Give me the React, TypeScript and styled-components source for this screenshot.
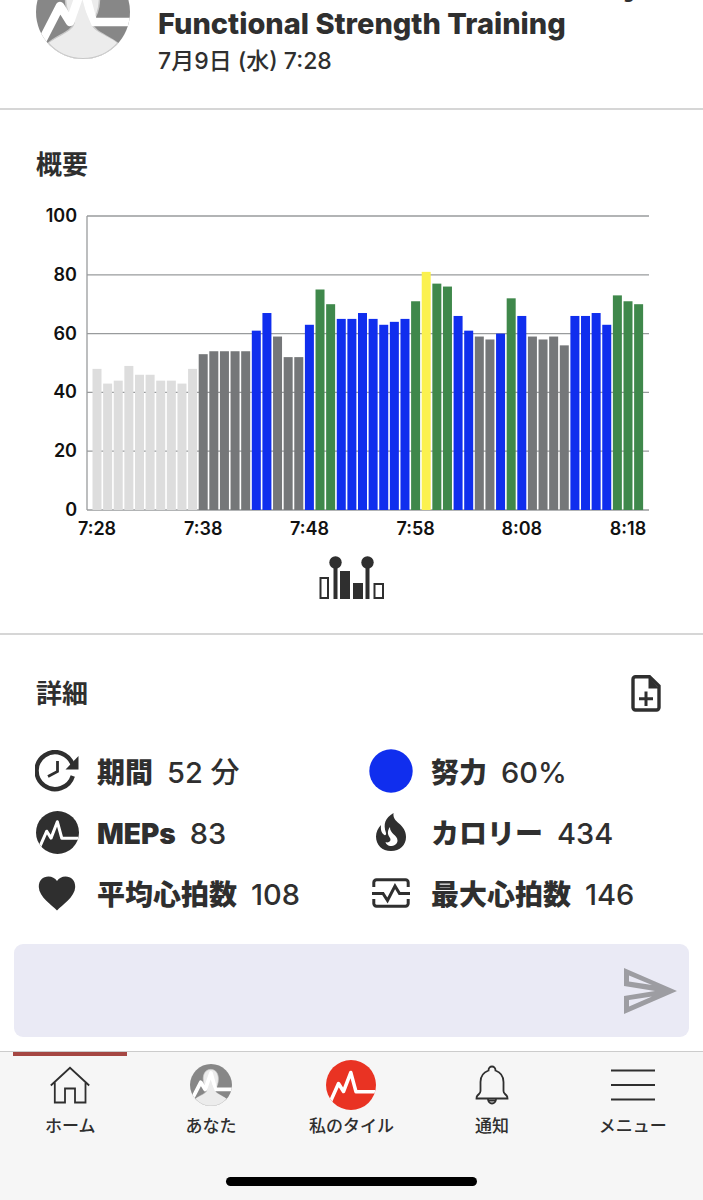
import React from "react";
import styled, { createGlobalStyle } from "styled-components";

const ink = "#2f2f2f";
const zoneColors = {
  rest: "#dddddd",
  gray: "#757779",
  blue: "#102eee",
  green: "#3f884b",
  yellow: "#fbf14f",
};
type Zone = keyof typeof zoneColors;

const GlobalStyle = createGlobalStyle`
  * { box-sizing: border-box; }
  body {
    margin: 0;
    background: #ffffff;
    color: ${ink};
    font-family: Inter, "Noto Sans CJK JP", sans-serif;
  }
  h1, h2, p, dl, dt, dd { margin: 0; }
  svg { display: block; flex: none; }
`;

const Page = styled.div`
  display: flex;
  flex-direction: column;
  min-height: 100vh;
`;

const Header = styled.header`
  display: flex;
  align-items: flex-end;
  gap: 28px;
  height: 110px;
  padding: 0 62px 29px 36px;
  overflow: hidden;
  border-bottom: 2px solid #d6d6d6;
`;

const AvatarSlot = styled.div`
  padding-bottom: 20px;
`;

const HeaderText = styled.div`
  flex: 1;
`;

const Title = styled.h1`
  font-size: 29px;
  line-height: 38px;
  font-weight: 800;
`;

const TitleEnd = styled.span`
  display: block;
  text-align: right;
`;

const DateText = styled.p`
  font-size: 23px;
  line-height: 36px;
  font-weight: 500;
`;

const Section = styled.section<{ $last?: boolean }>`
  padding: ${(p) => (p.$last ? "39px 36px 19px" : "35px 36px 33px")};
  border-bottom: ${(p) => (p.$last ? "none" : "2px solid #d6d6d6")};
`;

const SectionHead = styled.div`
  display: flex;
  align-items: center;
  justify-content: space-between;
  height: 40px;
  padding-right: 6px;
`;

const SectionTitle = styled.h2`
  font-size: 26px;
  line-height: 40px;
  font-weight: 600;
`;

const Chart = styled.svg`
  width: 100%;
  height: auto;
  margin-top: 13px;
  font-size: 18px;
  font-weight: 600;
`;

const IconButton = styled.button`
  display: flex;
  align-items: center;
  justify-content: center;
  padding: 0 0 2px;
  border: 0;
  background: none;
  color: ${ink};
  cursor: pointer;
`;

const RangeButton = styled(IconButton)`
  margin: 12px auto 0;
  padding: 0;
`;

const SendButton = styled(IconButton)`
  padding: 0;
`;

const Stats = styled.dl`
  display: grid;
  grid-template-columns: 334px 1fr;
  grid-auto-rows: 61px;
  margin-top: 28px;
`;

const Stat = styled.div`
  display: flex;
  align-items: center;
  white-space: nowrap;
`;

const StatIcon = styled.span`
  display: flex;
  justify-content: center;
  width: 42px;
  margin-right: 19px;
  padding-bottom: 3px;
`;

const StatLabel = styled.dt`
  font-size: 28px;
  line-height: 40px;
  font-weight: 900;
`;

const StatValue = styled.dd`
  && { margin-left: 14px; }
  font-size: 29px;
  line-height: 40px;
  font-weight: 500;
`;

const Composer = styled.form`
  display: flex;
  align-items: center;
  height: 93px;
  margin: 0 14px 14px;
  padding-right: 12px;
  border-radius: 9px;
  background: #eaeaf5;
`;

const MessageInput = styled.input`
  flex: 1;
  min-width: 0;
  height: 100%;
  padding: 0 20px;
  border: 0;
  outline: 0;
  background: transparent;
  color: ${ink};
  font: inherit;
  font-size: 22px;
`;

const BottomBar = styled.footer`
  flex: 1;
  border-top: 1px solid #cccccc;
  background: #f6f6f6;
`;

const Tabs = styled.nav`
  display: grid;
  grid-template-columns: repeat(5, 1fr);
`;

const Tab = styled.a<{ $active?: boolean }>`
  position: relative;
  display: flex;
  flex-direction: column;
  align-items: center;
  color: ${ink};
  font-size: 17px;
  line-height: 24px;
  font-weight: 500;
  text-decoration: none;
  white-space: nowrap;

  &::before {
    content: "";
    position: absolute;
    top: 0;
    left: 13px;
    right: 14px;
    height: 4px;
    background: ${(p) => (p.$active ? "#a54743" : "transparent")};
  }
`;

const TabIcon = styled.span`
  display: flex;
  align-items: center;
  height: 52px;
  margin: 7px 0 3px;
`;

const HomeIndicator = styled.div`
  width: 251px;
  height: 9px;
  margin: 39px auto 14px;
  border-radius: 5px;
  background: #000000;
`;

const samples: [Zone, number[]][] = [
  ["rest", [48, 43, 44, 49, 46, 46, 44, 44, 43, 48]],
  ["gray", [53, 54, 54, 54, 54]],
  ["blue", [61, 67]],
  ["gray", [59, 52, 52]],
  ["blue", [63]],
  ["green", [75, 70]],
  ["blue", [65, 65, 67, 65, 63, 64, 65]],
  ["green", [71]],
  ["yellow", [81]],
  ["green", [77, 76]],
  ["blue", [66, 61]],
  ["gray", [59, 58]],
  ["blue", [60]],
  ["green", [72]],
  ["blue", [66]],
  ["gray", [59, 58, 59, 56]],
  ["blue", [66, 66, 67, 63]],
  ["green", [73, 71, 70]],
];
const bars = samples.flatMap(([zone, values]) => values.map((value) => ({ zone, value })));
const times = ["7:28", "7:38", "7:48", "7:58", "8:08", "8:18"];

const plot = { left: 51, right: 613, top: 18, bottom: 312 };
const yFor = (v: number) => plot.bottom - ((plot.bottom - plot.top) * v) / 100;
const xFor = (i: number) => 61 + i * 10.62;

function EffortChart() {
  return (
    <Chart viewBox="0 0 631 346" role="img" aria-label="概要">
      {[0, 20, 40, 60, 80, 100].map((v) => (
        <g key={v}>
          <line x1={plot.left} x2={plot.right} y1={yFor(v)} y2={yFor(v)} stroke="#999b9d" strokeWidth="1.3" />
          <text x="41" y={yFor(v) + 6} textAnchor="end" fill="#111">{v}</text>
        </g>
      ))}
      <line x1={plot.left} x2={plot.left} y1={plot.top} y2={plot.bottom} stroke="#999b9d" strokeWidth="1.3" />
      {bars.map((b, i) => (
        <rect
          key={i}
          x={xFor(i) - 4.5}
          y={yFor(b.value)}
          width="9"
          height={plot.bottom - yFor(b.value)}
          fill={zoneColors[b.zone]}
        />
      ))}
      {times.map((t, i) => (
        <text key={t} x={xFor(i * 10)} y="337" textAnchor="middle" fill="#111">{t}</text>
      ))}
    </Chart>
  );
}

function Avatar({ size, id }: { size: number; id: string }) {
  return (
    <svg width={size} height={size} viewBox="0 0 94 94">
      <clipPath id={id}><circle cx="47" cy="47" r="47" /></clipPath>
      <g clipPath={`url(#${id})`}>
        <rect width="94" height="94" fill="#878787" />
        <path d="M46.500 12C36 12 29.500 21 29.500 33c0 10 3.500 19 8.500 25-2 9-17 12-26 20.500V96H82V78.500C73 71 58 67 55.500 58c5-6 8-15 8-25 0-12-6.500-21-17-21z" fill="#ececec" stroke="#c8c8c8" strokeWidth="1.5" />
        <path d="M4 80 24 41 34 57 47 20 57 57H96" fill="none" stroke="#fff" strokeWidth="8.500" strokeLinejoin="round" />
        <path d="M39 60c-2 8-17 11-27 18.500V96H82V78.500C73 71 58 67 55.500 60L47 40z" fill="#ececec" />
        <path d="M12 78.500A47 47 0 0 0 82 78.500" fill="none" stroke="#c8c8c8" strokeWidth="2.400" />
      </g>
    </svg>
  );
}

function PulseLogo({ size, color, line, id }: { size: number; color: string; line: string; id: string }) {
  return (
    <svg width={size} height={size} viewBox="0 0 50 50">
      <clipPath id={id}><circle cx="25" cy="25" r="25" /></clipPath>
      <g clipPath={`url(#${id})`}>
        <rect width="50" height="50" fill={color} />
        <path d="M2 47 12.500 23.500 17.500 31.500 24.800 12.500 30 31.700H52" fill="none" stroke={line} strokeWidth="3.500" strokeLinejoin="round" />
      </g>
    </svg>
  );
}

const RangeIcon = () => (
  <svg width="66" height="44" viewBox="0 0 66 44" fill={ink}>
    <rect x="1.500" y="22" width="7.500" height="20" fill="none" stroke={ink} strokeWidth="2" />
    <rect x="14.500" y="6" width="4" height="37" />
    <circle cx="16.500" cy="6.500" r="6.200" />
    <rect x="21" y="15" width="10" height="28" />
    <rect x="34" y="27" width="10" height="16" />
    <rect x="46.500" y="6" width="4" height="37" />
    <circle cx="48.500" cy="6.500" r="6.200" />
    <rect x="55.500" y="28" width="8.500" height="14" fill="none" stroke={ink} strokeWidth="2" />
  </svg>
);

const AddNoteIcon = () => (
  <svg width="30" height="37" viewBox="0 0 30 37" fill="none" stroke={ink} strokeWidth="3.400">
    <path d="M4.500 1.800H18.500L28 11V32.500a2.500 2.500 0 0 1-2.500 2.500h-21A2.500 2.500 0 0 1 2 32.500V4.300a2.500 2.500 0 0 1 2.500-2.500z" />
    <path d="M17.500 2v11.500H28z" fill={ink} stroke="none" />
    <path d="M15 16.500v14.500M8 23.700h14" strokeWidth="3" />
  </svg>
);

const DurationIcon = () => (
  <svg width="44" height="42" viewBox="0 0 44 42" fill="none" stroke={ink}>
    <path d="M38 16A18.500 18.500 0 1 0 37.800 26" strokeWidth="4.400" />
    <path d="M43.500 6v13.500H30.500z" fill={ink} stroke="none" />
    <path d="M22.500 11v10.500L13 26.500" strokeWidth="2.800" />
  </svg>
);

const HeartIcon = () => (
  <svg width="38" height="35" viewBox="0 0 38 35" fill={ink}>
    <path d="M19 34.500C14 29 1 21 .8 11 .6 4.500 5 .5 10.500.5c3.500 0 6.500 1.500 8.500 4.500C21 2 24 .5 27.500.5 33 .5 37.400 4.500 37.200 11 37 21 24 29 19 34.500z" />
  </svg>
);

const EffortIcon = () => (
  <svg width="44" height="44" viewBox="0 0 44 44"><circle cx="22" cy="22" r="21.700" fill={zoneColors.blue} /></svg>
);

const FlameIcon = () => (
  <svg width="30" height="38" viewBox="0 0 30 38" fill={ink}>
    <path d="M17.500 0C9 5 7 11 10 20c.5 2-1 3-2.300 1.500C5.500 19.500 4.500 17 5 12 2 15 0 19 0 23.500 0 32 6 38 15 38s15-6 15-14c0-6-3-10-7-13.500C19 7 17 5 17.500 0z" />
    <path d="M14 14c-.5 6.500 7.500 8 7.500 13.500 0 3.500-3 5.500-7.500 5.500-2.500-.5-4-2-4.500-4 2 1 4.500 0 5-2 .3-2-2-3.500-2.500-6-.5-2.500.5-5.500 2-7z" fill="#fff" />
  </svg>
);

const MaxRateIcon = () => (
  <svg width="38" height="30" viewBox="0 0 38 30" fill="none" stroke={ink} strokeWidth="3">
    <path d="M1.800 9V4.500A2.700 2.700 0 0 1 4.500 1.800h29a2.700 2.700 0 0 1 2.700 2.700V9M1.800 21v4.500a2.700 2.700 0 0 0 2.700 2.700h29a2.700 2.700 0 0 0 2.700-2.700V21" />
    <path d="M0 15.500H11L15.500 22.500 23 8 27.500 15.500H38" strokeWidth="3" />
  </svg>
);

const SendIcon = () => (
  <svg width="53" height="46" viewBox="0 0 53 46">
    <path fillRule="evenodd" fill="#9d9da2" d="M0 0 53 23 0 46V28L31 23 0 18zM5 7.500V13.500L28 17zM5 32V38.500L28 28.500z" />
  </svg>
);

const HomeIcon = () => (
  <svg width="40" height="38" viewBox="0 0 40 38" fill="none" stroke={ink} strokeWidth="1.800">
    <path d="M.8 19.500 20 1.800 39.200 19.500M4.800 16V36.500H15V22.500H25V36.500H35.500V16" />
  </svg>
);

const BellIcon = () => (
  <svg width="34" height="40" viewBox="0 0 34 40" fill="none" stroke={ink} strokeWidth="1.800">
    <path d="M13.500 5.500a3.500 4 0 0 1 7 0C26 7.500 28.500 12 28.500 17V26c0 1.500.5 2 1.500 3l1.500 1.500c1 1 1 1.500 1 3H1.500c0-1.500 0-2 1-3L4 29c1-1 1.500-1.500 1.500-3V17c0-5 2.500-9.500 8-11.500z" />
    <path d="M13 34a4 4.500 0 0 0 8 0M13 35.500h8" />
  </svg>
);

const MenuIcon = () => (
  <svg width="44" height="34" viewBox="0 0 44 34" stroke={ink} strokeWidth="2.200">
    <path d="M0 2.500h44M0 17h44M0 31.500h44" />
  </svg>
);

const stats = [
  { label: "期間", value: "52 分", icon: <DurationIcon /> },
  { label: "努力", value: "60%", icon: <EffortIcon /> },
  { label: "MEPs", value: "83", icon: <PulseLogo size={43} color={ink} line="#fff" id="meps-logo" /> },
  { label: "カロリー", value: "434", icon: <FlameIcon /> },
  { label: "平均心拍数", value: "108", icon: <HeartIcon /> },
  { label: "最大心拍数", value: "146", icon: <MaxRateIcon /> },
];

const tabs = [
  { label: "ホーム", icon: <HomeIcon />, active: true },
  { label: "あなた", icon: <Avatar size={42} id="tab-avatar" /> },
  { label: "私のタイル", icon: <PulseLogo size={50} color="#e93323" line="#fff" id="tile-logo" /> },
  { label: "通知", icon: <BellIcon /> },
  { label: "メニュー", icon: <MenuIcon /> },
];

export default function App() {
  return (
    <Page>
      <GlobalStyle />
      <Header>
        <AvatarSlot><Avatar size={94} id="header-avatar" /></AvatarSlot>
        <HeaderText>
          <Title>
            <TitleEnd>y</TitleEnd>
            Functional Strength Training
          </Title>
          <DateText>7月9日 (水) 7:28</DateText>
        </HeaderText>
      </Header>
      <main>
        <Section>
          <SectionHead><SectionTitle>概要</SectionTitle></SectionHead>
          <EffortChart />
          <RangeButton type="button" aria-label="範囲"><RangeIcon /></RangeButton>
        </Section>
        <Section $last>
          <SectionHead>
            <SectionTitle>詳細</SectionTitle>
            <IconButton type="button" aria-label="メモを追加"><AddNoteIcon /></IconButton>
          </SectionHead>
          <Stats>
            {stats.map((s) => (
              <Stat key={s.label}>
                <StatIcon>{s.icon}</StatIcon>
                <StatLabel>{s.label}</StatLabel>
                <StatValue>{s.value}</StatValue>
              </Stat>
            ))}
          </Stats>
        </Section>
        <Composer onSubmit={(e) => e.preventDefault()}>
          <MessageInput type="text" aria-label="コメント" />
          <SendButton type="submit" aria-label="送信"><SendIcon /></SendButton>
        </Composer>
      </main>
      <BottomBar>
        <Tabs>
          {tabs.map((t) => (
            <Tab key={t.label} href="#" $active={t.active}>
              <TabIcon>{t.icon}</TabIcon>
              {t.label}
            </Tab>
          ))}
        </Tabs>
        <HomeIndicator />
      </BottomBar>
    </Page>
  );
}
